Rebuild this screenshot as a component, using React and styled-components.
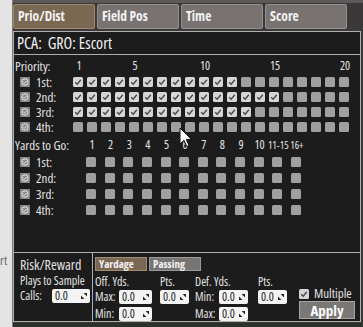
import React from 'react';
import styled, { createGlobalStyle } from 'styled-components';

const GlobalStyle = createGlobalStyle`
  html, body { margin: 0; padding: 0; background: #e4e4e4; }
  body { font-family: 'Open Sans', 'Noto Sans', sans-serif; font-stretch: 82%; }
`;

const Page = styled.div`
  position: relative;
  width: 363px;
  height: 327px;
  display: flex;
  overflow: hidden;
`;

const SideStrip = styled.div`
  width: 12px;
  flex: none;
  background: #e4e4e4;
  border-right: 1px solid #7a7a7a;
  overflow: hidden;
`;

const SideText = styled.div`
  margin-top: 252px;
  font-size: 13px;
  line-height: 16px;
  color: #6a6a6a;
`;

const Main = styled.div`
  flex: 1;
  display: flex;
  flex-direction: column;
  background: #3a3838;
  border-top: 3px solid #5c5a59;
`;

const TabBar = styled.div`
  height: 25px;
  padding: 1px 0 2px 0;
  display: flex;
  gap: 2px;
`;

const Tab = styled.div`
  width: 76px;
  height: 23px;
  padding-left: 4px;
  border: 1px solid ${p => (p.$active ? '#9c8a73' : '#959090')};
  border-radius: 2px;
  background: ${p => (p.$active ? '#7a6853' : '#787371')};
  color: #f2f2f2;
  font-weight: bold;
  font-size: 13.5px;
  line-height: 23px;
`;

const Panel = styled.div`
  height: 289px;
  margin-right: 2px;
  border: 1px solid #aeaeae;
  background: #1d1c1d;
  display: flex;
  flex-direction: column;
  color: #e4e4e4;
`;

const Title = styled.div`
  height: 22px;
  padding-left: 3px;
  border-bottom: 1px solid #aeaeae;
  font-size: 16px;
  line-height: 22px;
  color: #f2f2f2;
  white-space: pre;
`;

const GridArea = styled.div`
  flex: 1;
  padding-top: 3px;
  display: flex;
  flex-direction: column;
`;

const HeaderRow = styled.div`
  height: ${p => p.$h}px;
  margin-top: ${p => p.$mt || 0}px;
  display: flex;
  align-items: center;
  line-height: 14px;
`;

const HeaderLabel = styled.div`
  width: ${p => p.$w}px;
  padding-left: 1px;
  flex: none;
  font-size: 13px;
  white-space: nowrap;
`;

const Row = styled.div`
  height: ${p => p.$h}px;
  display: flex;
  align-items: center;
  line-height: 14px;
`;

const RowLabel = styled.div`
  width: ${p => p.$w}px;
  flex: none;
  display: flex;
  align-items: center;
  padding-left: 6px;
  box-sizing: border-box;
  font-size: 13px;
  gap: 6px;
`;

const RowIcon = styled.div`
  width: 10px;
  height: 10px;
  background: #8a8a8a;
  border-radius: 1px;
  display: flex;
  align-items: center;
  justify-content: center;
`;

const Cells = styled.div`
  display: grid;
  grid-template-columns: repeat(${p => p.$n}, 10px);
  column-gap: ${p => p.$gap}px;
`;

const NumCell = styled.div`
  width: 10px;
  display: flex;
  justify-content: center;
  white-space: nowrap;
  font-size: ${p => (p.$small ? 10.5 : 12)}px;
  font-stretch: ${p => (p.$small ? '75%' : '82%')};
`;

const Box = styled.div`
  width: 10px;
  height: 10px;
  flex: none;
  border-radius: 1.5px;
  background: ${p => (p.$on ? '#d6d6d6' : '#a0a0a0')};
  display: flex;
  align-items: center;
  justify-content: center;
`;

const Bottom = styled.div`
  height: 68px;
  border-top: 1px solid #aeaeae;
  display: flex;
`;

const RiskCol = styled.div`
  width: 72px;
  padding-left: 6px;
  border-right: 1px solid #aeaeae;
  flex: none;
`;

const RiskTitle = styled.div`
  margin-top: 4px;
  font-size: 14px;
  line-height: 15px;
`;

const SmallText = styled.div`
  font-size: 12px;
  line-height: 14px;
  white-space: nowrap;
  margin-top: ${p => p.$mt || 0}px;
  width: ${p => (p.$w ? `${p.$w}px` : 'auto')};
  flex: none;
`;

const InlineRow = styled.div`
  display: flex;
  align-items: center;
  height: 14px;
  margin-top: ${p => p.$mt || 0}px;
`;

const Field = styled.div`
  width: ${p => p.$w}px;
  height: 14px;
  box-sizing: border-box;
  background: #f4f4f4;
  border-radius: 2px;
  display: flex;
  align-items: center;
  justify-content: space-between;
  padding: 0 3px;
  color: #222;
  font-size: 12px;
  line-height: 14px;
  flex: none;
`;

const RightCol = styled.div`
  flex: 1;
  padding-left: 2px;
  display: flex;
  flex-direction: column;
`;

const SubTabs = styled.div`
  margin-top: 4px;
  display: flex;
  gap: 2px;
`;

const SubTab = styled.div`
  width: ${p => p.$w}px;
  height: 14px;
  box-sizing: border-box;
  padding-left: 3px;
  border: 1px solid ${p => (p.$active ? '#a08c72' : '#9a9a9a')};
  background: ${p => (p.$active ? '#7a6853' : '#787473')};
  color: #f4f4f4;
  font-size: 11px;
  font-weight: bold;
  line-height: 12px;
`;

const FieldsRow = styled.div`
  margin-top: 4px;
  display: flex;
`;

const Group = styled.div`
  display: flex;
  flex-direction: column;
  margin-left: ${p => p.$ml || 0}px;
`;

const ActionGroup = styled.div`
  margin-left: 12px;
  padding-top: 13px;
  display: flex;
  flex-direction: column;
`;

const MultiRow = styled.div`
  display: flex;
  align-items: center;
  gap: 5px;
  height: 11px;
  font-size: 13px;
  line-height: 11px;
`;

const ApplyButton = styled.div`
  margin-top: 2px;
  width: 56px;
  height: 18px;
  box-sizing: border-box;
  background: #7b7775;
  border: 1px solid #a7a3a0;
  color: #fafafa;
  font-weight: bold;
  font-size: 15px;
  line-height: 16px;
  text-align: center;
`;

const Footer = styled.div`
  flex: 1;
  background: #29322a;
  margin-top: 1px;
`;

const Cursor = styled.svg`
  position: absolute;
  left: 179px;
  top: 127px;
`;

const Check = ({ color = '#4a4a4a' }) => (
  <svg width="8" height="8" viewBox="0 0 8 8">
    <path d="M1.2 4.2 L3.2 6.2 L6.8 1.8" fill="none" stroke={color} strokeWidth="1.4" />
  </svg>
);

const RoundCheck = () => (
  <svg width="8" height="8" viewBox="0 0 8 8">
    <circle cx="4" cy="4" r="3.2" fill="none" stroke="#eee" strokeWidth="0.9" />
    <path d="M2.4 4.1 L3.6 5.2 L5.7 2.9" fill="none" stroke="#eee" strokeWidth="0.9" />
  </svg>
);

const SpinIcon = () => (
  <svg width="6" height="6" viewBox="0 0 6 6">
    <path d="M2.6 0 L6 0 L6 3.4 Z" fill="#222" />
    <path d="M0 2.6 L0 6 L3.4 6 Z" fill="#222" />
  </svg>
);

const Input = ({ w }) => (
  <Field $w={w}>
    <span>0.0</span>
    <SpinIcon />
  </Field>
);

const priorityChecked = [12, 15, 13, 0];
const downs = ['1st:', '2nd:', '3rd:', '4th:'];
const priorityNums = { 1: '1', 5: '5', 10: '10', 15: '15', 20: '20' };
const yardNums = ['1', '2', '3', '4', '5', '6', '7', '8', '9', '10', '11-15', '16+'];

export default function App() {
  return (
    <Page>
      <GlobalStyle />
      <SideStrip>
        <SideText>rt</SideText>
      </SideStrip>
      <Main>
        <TabBar>
          <Tab $active>Prio/Dist</Tab>
          <Tab>Field Pos</Tab>
          <Tab>Time</Tab>
          <Tab>Score</Tab>
        </TabBar>
        <Panel>
          <Title>{'PCA:  GRO: Escort'}</Title>
          <GridArea>
            <HeaderRow $h={16}>
              <HeaderLabel $w={59}>Priority:</HeaderLabel>
              <Cells $n={20} $gap={4}>
                {Array.from({ length: 20 }, (_, i) => (
                  <NumCell key={i}>{priorityNums[i + 1] || ''}</NumCell>
                ))}
              </Cells>
            </HeaderRow>
            {downs.map((d, r) => (
              <Row key={d} $h={15}>
                <RowLabel $w={59}>
                  <RowIcon><RoundCheck /></RowIcon>
                  {d}
                </RowLabel>
                <Cells $n={20} $gap={4}>
                  {Array.from({ length: 20 }, (_, i) => (
                    <Box key={i} $on={i < priorityChecked[r]}>
                      {i < priorityChecked[r] && <Check />}
                    </Box>
                  ))}
                </Cells>
              </Row>
            ))}
            <HeaderRow $h={18} $mt={2}>
              <HeaderLabel $w={72}>Yards to Go:</HeaderLabel>
              <Cells $n={12} $gap={8.64}>
                {yardNums.map(n => (
                  <NumCell key={n} $small={n.length > 2}>{n}</NumCell>
                ))}
              </Cells>
            </HeaderRow>
            {downs.map(d => (
              <Row key={d} $h={16}>
                <RowLabel $w={72}>
                  <RowIcon><RoundCheck /></RowIcon>
                  {d}
                </RowLabel>
                <Cells $n={12} $gap={8.64}>
                  {yardNums.map(n => <Box key={n} />)}
                </Cells>
              </Row>
            ))}
          </GridArea>
          <Bottom>
            <RiskCol>
              <RiskTitle>Risk/Reward</RiskTitle>
              <SmallText $mt={2}>Plays to Sample</SmallText>
              <InlineRow $mt={1}>
                <SmallText $w={32}>Calls:</SmallText>
                <Input w={38} />
              </InlineRow>
            </RiskCol>
            <RightCol>
              <SubTabs>
                <SubTab $active $w={52}>Yardage</SubTab>
                <SubTab $w={52}>Passing</SubTab>
              </SubTabs>
              <FieldsRow>
                <Group>
                  <SmallText>Off. Yds.</SmallText>
                  <InlineRow $mt={1}>
                    <SmallText $w={24}>Max:</SmallText>
                    <Input w={33} />
                  </InlineRow>
                  <InlineRow $mt={3}>
                    <SmallText $w={24}>Min:</SmallText>
                    <Input w={33} />
                  </InlineRow>
                </Group>
                <Group $ml={8}>
                  <SmallText>Pts.</SmallText>
                  <InlineRow $mt={1}>
                    <Input w={29} />
                  </InlineRow>
                </Group>
                <Group $ml={6}>
                  <SmallText>Def. Yds.</SmallText>
                  <InlineRow $mt={1}>
                    <SmallText $w={24}>Min:</SmallText>
                    <Input w={29} />
                  </InlineRow>
                  <InlineRow $mt={3}>
                    <SmallText $w={24}>Max:</SmallText>
                    <Input w={29} />
                  </InlineRow>
                </Group>
                <Group $ml={10}>
                  <SmallText>Pts.</SmallText>
                  <InlineRow $mt={1}>
                    <Input w={29} />
                  </InlineRow>
                </Group>
                <ActionGroup>
                  <MultiRow>
                    <Box $on><Check /></Box>
                    Multiple
                  </MultiRow>
                  <ApplyButton>Apply</ApplyButton>
                </ActionGroup>
              </FieldsRow>
            </RightCol>
          </Bottom>
        </Panel>
        <Footer />
      </Main>
      <Cursor width="14" height="22" viewBox="0 0 14 22">
        <path d="M1 1 L1 17 L5 13.2 L7.8 19.5 L10 18.6 L7.3 12.4 L12.4 12.4 Z" fill="#fff" stroke="#111" strokeWidth="1" />
      </Cursor>
    </Page>
  );
}
